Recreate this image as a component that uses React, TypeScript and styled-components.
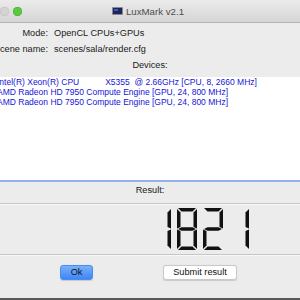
import { FC } from "react";
import styled, { createGlobalStyle } from "styled-components";

const GlobalStyle = createGlobalStyle`
	html, body {
		margin: 0;
		padding: 0;
		background: #3b3b3b;
	}
	#root {
		width: 300px;
		height: 300px;
		overflow: hidden;
	}
`;

const Window = styled.div`
	margin-left: -10px;
	width: 320px;
	height: 298px;
	background-color: #ececec;
	display: flex;
	flex-direction: column;
	font-family: "Liberation Sans", Arial, sans-serif;
	color: #1a1a1a;
	border-bottom: 2px solid #5a5a5a;
`;

const TitleBar = styled.div`
	height: 22px;
	flex-shrink: 0;
	display: flex;
	align-items: center;
	position: relative;
	background: linear-gradient(#ebebeb, #d5d5d5);
	border-bottom: 1px solid #b4b4b4;
`;

const Lights = styled.div`
	display: flex;
	gap: 4px;
	margin-left: -3px;
`;

const Light = styled.span<{ $color: string; $border: string }>`
	width: 9px;
	height: 9px;
	border-radius: 50%;
	background-color: ${(p) => p.$color};
	box-shadow: inset 0 0 0 0.5px ${(p) => p.$border};
`;

const Title = styled.div`
	position: absolute;
	left: 0;
	right: 0;
	top: 0;
	bottom: 0;
	display: flex;
	align-items: center;
	justify-content: center;
	gap: 3px;
	font-size: 9.7px;
	color: #4d4d4d;
	padding-right: 4px;
`;

const InfoGrid = styled.div`
	display: grid;
	grid-template-columns: 58px 1fr;
	column-gap: 6px;
	padding-top: 2px;
	font-size: 9.2px;
	line-height: 16px;
`;

const Label = styled.div`
	display: flex;
	justify-content: flex-end;
	white-space: nowrap;
	min-width: 0;
`;

const Value = styled.div`
	white-space: nowrap;
`;

const SectionLabel = styled.div`
	text-align: center;
	font-size: 9.2px;
	line-height: 16px;
`;

const DeviceList = styled.div`
	margin-top: 4px;
	height: 103px;
	flex-shrink: 0;
	background-color: #ffffff;
	border-bottom: 2px solid #8fb1ef;
	padding-left: 7px;
	font-size: 8.5px;
	line-height: 10px;
	color: #1515d6;
	white-space: pre;
`;

const ResultHeader = styled.div`
	text-align: center;
	font-size: 9.2px;
	line-height: 14px;
	padding-top: 1px;
	padding-bottom: 6px;
	border-bottom: 1px solid #c6c6c6;
	box-shadow: 0 1px 0 #f8f8f8;
`;

const LcdRow = styled.div`
	display: flex;
	justify-content: flex-end;
	padding: 4px 58px 4px 0;
	border-bottom: 1px solid #c6c6c6;
	box-shadow: 0 1px 0 #f8f8f8;
`;

const ButtonRow = styled.div`
	display: flex;
	align-items: center;
	gap: 70px;
	padding: 10px 0 0 70px;
`;

const Button = styled.button<{ $primary?: boolean }>`
	height: 15px;
	padding: 0;
	width: ${(p) => (p.$primary ? "33px" : "74px")};
	border-radius: 3px;
	font-family: "Liberation Sans", Arial, sans-serif;
	font-size: 9.2px;
	line-height: 13px;
	color: #111;
	border: 1px solid ${(p) => (p.$primary ? "#4a8cf0" : "#c9c9c9")};
	background: ${(p) => (p.$primary ? "linear-gradient(#79b0fb, #3d86f7)" : "#ffffff")};
	box-shadow: 0 0.5px 1px rgba(0, 0, 0, 0.15);
`;

const TitleIcon: FC = () => (
	<svg width="11" height="8" viewBox="0 0 11 8">
		<rect x="0" y="0" width="11" height="8" rx="0.8" fill="#8a8a8a" />
		<rect x="1" y="1" width="9" height="6" fill="#1c2560" />
		<rect x="2" y="2" width="4" height="2" fill="#3c5bb0" />
	</svg>
);

type Seg = "a" | "b" | "c" | "d" | "e" | "f" | "g";

const segments: Record<Seg, string> = {
	a: "1,0 19,0 15.5,3.5 4.5,3.5",
	b: "20,1 16.5,4.5 16.5,19 20,20.5",
	c: "20,21.5 16.5,23 16.5,37.5 20,41",
	d: "1,42 19,42 15.5,38.5 4.5,38.5",
	e: "0,21.5 3.5,23 3.5,37.5 0,41",
	f: "0,1 3.5,4.5 3.5,19 0,20.5",
	g: "1,21 4.5,19.25 15.5,19.25 19,21 15.5,22.75 4.5,22.75",
};

const digitSegs: Record<string, Seg[]> = {
	"0": ["a", "b", "c", "d", "e", "f"],
	"1": ["b", "c"],
	"2": ["a", "b", "g", "e", "d"],
	"3": ["a", "b", "g", "c", "d"],
	"4": ["f", "g", "b", "c"],
	"5": ["a", "f", "g", "c", "d"],
	"6": ["a", "f", "g", "e", "c", "d"],
	"7": ["a", "b", "c"],
	"8": ["a", "b", "c", "d", "e", "f", "g"],
	"9": ["a", "b", "c", "d", "f", "g"],
};

const LcdNumber: FC<{ value: string }> = ({ value }) => (
	<svg width={value.length * 26} height="42" viewBox={`0 0 ${value.length * 26} 42`}>
		{value.split("").map((ch, i) => (
			<g key={i} transform={`translate(${i * 26 + 3} 0)`}>
				{(digitSegs[ch] || []).map((s) => (
					<polygon key={s} points={segments[s]} fill="#111" />
				))}
			</g>
		))}
	</svg>
);

const devices = [
	"Intel(R) Xeon(R) CPU           X5355  @ 2.66GHz [CPU, 8, 2660 MHz]",
	"AMD Radeon HD 7950 Compute Engine [GPU, 24, 800 MHz]",
	"AMD Radeon HD 7950 Compute Engine [GPU, 24, 800 MHz]",
];

const App: FC = () => {
	return (
		<>
			<GlobalStyle />
			<Window>
				<TitleBar>
					<Lights>
						<Light $color="#d3d3d3" $border="#bdbdbd" />
						<Light $color="#d3d3d3" $border="#bdbdbd" />
						<Light $color="#5bc83f" $border="#45ad2e" />
					</Lights>
					<Title>
						<TitleIcon />
						<span>LuxMark v2.1</span>
					</Title>
				</TitleBar>
				<InfoGrid>
					<Label>
						<span>Mode:</span>
					</Label>
					<Value>OpenCL CPUs+GPUs</Value>
					<Label>
						<span>Scene name:</span>
					</Label>
					<Value>scenes/sala/render.cfg</Value>
				</InfoGrid>
				<SectionLabel>Devices:</SectionLabel>
				<DeviceList>
					{devices.map((d, i) => (
						<div key={i}>{d}</div>
					))}
				</DeviceList>
				<ResultHeader>Result:</ResultHeader>
				<LcdRow>
					<LcdNumber value="1821" />
				</LcdRow>
				<ButtonRow>
					<Button $primary>Ok</Button>
					<Button>Submit result</Button>
				</ButtonRow>
			</Window>
		</>
	);
};

export default App;
